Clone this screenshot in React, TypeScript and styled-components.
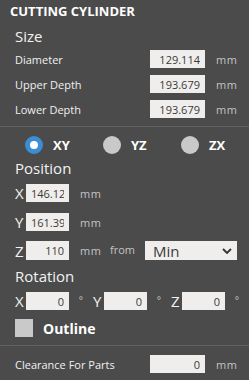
import styled, { createGlobalStyle } from "styled-components";

const GlobalStyle = createGlobalStyle`
  html, body {
    margin: 0;
    padding: 0;
    background: #4b4b4b;
  }
  body {
    font-family: "Open Sans", "Noto Sans", sans-serif;
    color: #f2f2f2;
  }
`;

const Panel = styled.div`
  width: 249px;
  min-height: 380px;
  background: #4b4b4b;
  display: flex;
  flex-direction: column;
  & > * {
    flex-shrink: 0;
  }
`;

const Title = styled.div`
  height: 22px;
  padding-left: 10px;
  display: flex;
  align-items: center;
  font-size: 13px;
  font-weight: 700;
  color: #ffffff;
`;

const Section = styled.div<{ top?: number }>`
  display: flex;
  flex-direction: column;
  padding-left: 15px;
  padding-top: ${(p) => p.top ?? 0}px;
`;

const Heading = styled.div<{ mb?: number }>`
  height: 20px;
  display: flex;
  align-items: center;
  font-size: 15px;
  color: #f2f2f2;
  margin-bottom: ${(p) => p.mb ?? 0}px;
`;

const Row = styled.div<{ mb?: number; h?: number }>`
  display: flex;
  align-items: center;
  height: ${(p) => p.h ?? 18}px;
  margin-bottom: ${(p) => p.mb ?? 0}px;
`;

const Label = styled.div`
  width: 135px;
  font-size: 11px;
  color: #f0f0f0;
`;

const AxisLabel = styled.div`
  width: 11px;
  font-size: 15px;
  color: #f2f2f2;
`;

const Field = styled.input<{ w?: number; h?: number; left?: boolean }>`
  box-sizing: border-box;
  width: ${(p) => p.w ?? 55}px;
  height: ${(p) => p.h ?? 18}px;
  border: none;
  outline: none;
  margin: 0;
  padding: 0 5px;
  background: #efeeec;
  color: #3a3a3a;
  font-family: "Open Sans", "Noto Sans", sans-serif;
  font-size: 11px;
  text-align: ${(p) => (p.left ? "left" : "right")};
`;

const Unit = styled.div`
  width: 32px;
  padding-left: 11px;
  box-sizing: border-box;
  font-size: 11px;
  color: #c4c4c4;
  letter-spacing: 0.5px;
`;

const Divider = styled.div`
  height: 1px;
  background: #626262;
`;

const RadioRow = styled.div`
  height: 18px;
  display: flex;
  align-items: center;
  padding-left: 25px;
  margin: 9px 0 4px;
`;

const RadioItem = styled.div<{ w: number }>`
  width: ${(p) => p.w}px;
  display: flex;
  align-items: center;
  gap: 10px;
  font-size: 13px;
  font-weight: 700;
  color: #ffffff;
`;

const RadioDot = styled.div<{ on?: boolean }>`
  width: 18px;
  height: 18px;
  border-radius: 50%;
  box-sizing: border-box;
  background: ${(p) => (p.on ? "#ffffff" : "#c9c9c9")};
  border: ${(p) => (p.on ? "5px solid #3c8ed3" : "none")};
`;

const FromText = styled.div`
  font-size: 11px;
  color: #c4c4c4;
  margin: 0 10px 0 9px;
  padding-bottom: 2px;
`;

const Select = styled.div`
  box-sizing: border-box;
  width: 92px;
  height: 19px;
  background: #efeeec;
  color: #3a3a3a;
  display: flex;
  align-items: center;
  justify-content: space-between;
  padding: 0 5px 0 8px;
  font-size: 15px;
`;

const Degree = styled.div`
  width: 24px;
  text-align: center;
  font-size: 10px;
  color: #c4c4c4;
  padding-bottom: 3px;
`;

const CheckRow = styled.div`
  display: flex;
  align-items: center;
  gap: 10px;
  height: 18px;
  margin: 9px 0 8px;
`;

const CheckBox = styled.div`
  width: 18px;
  height: 18px;
  background: #c9c9c9;
`;

const CheckLabel = styled.div`
  font-size: 14px;
  font-weight: 700;
  color: #ffffff;
`;

export default function App() {
  return (
    <Panel>
      <GlobalStyle />
      <Title>CUTTING CYLINDER</Title>
      <Section top={4}>
        <Heading mb={4}>Size</Heading>
        <Row mb={7}>
          <Label>Diameter</Label>
          <Field readOnly value="129.114" />
          <Unit>mm</Unit>
        </Row>
        <Row mb={7}>
          <Label>Upper Depth</Label>
          <Field readOnly value="193.679" />
          <Unit>mm</Unit>
        </Row>
        <Row mb={8}>
          <Label>Lower Depth</Label>
          <Field readOnly value="193.679" />
          <Unit>mm</Unit>
        </Row>
      </Section>
      <Divider />
      <RadioRow>
        <RadioItem w={78}>
          <RadioDot on />
          XY
        </RadioItem>
        <RadioItem w={78}>
          <RadioDot />
          YZ
        </RadioItem>
        <RadioItem w={60}>
          <RadioDot />
          ZX
        </RadioItem>
      </RadioRow>
      <Section>
        <Heading mb={6}>Position</Heading>
        <Row mb={11}>
          <AxisLabel>X</AxisLabel>
          <Field w={43} left readOnly value="146.1234" />
          <Unit>mm</Unit>
        </Row>
        <Row mb={10}>
          <AxisLabel>Y</AxisLabel>
          <Field w={43} left readOnly value="161.3991" />
          <Unit>mm</Unit>
        </Row>
        <Row mb={6} h={19}>
          <AxisLabel>Z</AxisLabel>
          <Field w={43} h={19} readOnly value="110" />
          <Unit>mm</Unit>
          <FromText>from</FromText>
          <Select>
            Min
            <svg width="10" height="6" viewBox="0 0 10 6">
              <path d="M1 1 L5 5 L9 1" stroke="#333" strokeWidth="1.8" fill="none" />
            </svg>
          </Select>
        </Row>
        <Heading mb={6}>Rotation</Heading>
        <Row>
          <AxisLabel>X</AxisLabel>
          <Field w={43} readOnly value="0" />
          <Degree>°</Degree>
          <AxisLabel>Y</AxisLabel>
          <Field w={43} readOnly value="0" />
          <Degree>°</Degree>
          <AxisLabel>Z</AxisLabel>
          <Field w={43} readOnly value="0" />
          <Degree>°</Degree>
        </Row>
        <CheckRow>
          <CheckBox />
          <CheckLabel>Outline</CheckLabel>
        </CheckRow>
      </Section>
      <Divider />
      <Section top={9}>
        <Row>
          <Label>Clearance For Parts</Label>
          <Field readOnly value="0" />
          <Unit>mm</Unit>
        </Row>
      </Section>
    </Panel>
  );
}
